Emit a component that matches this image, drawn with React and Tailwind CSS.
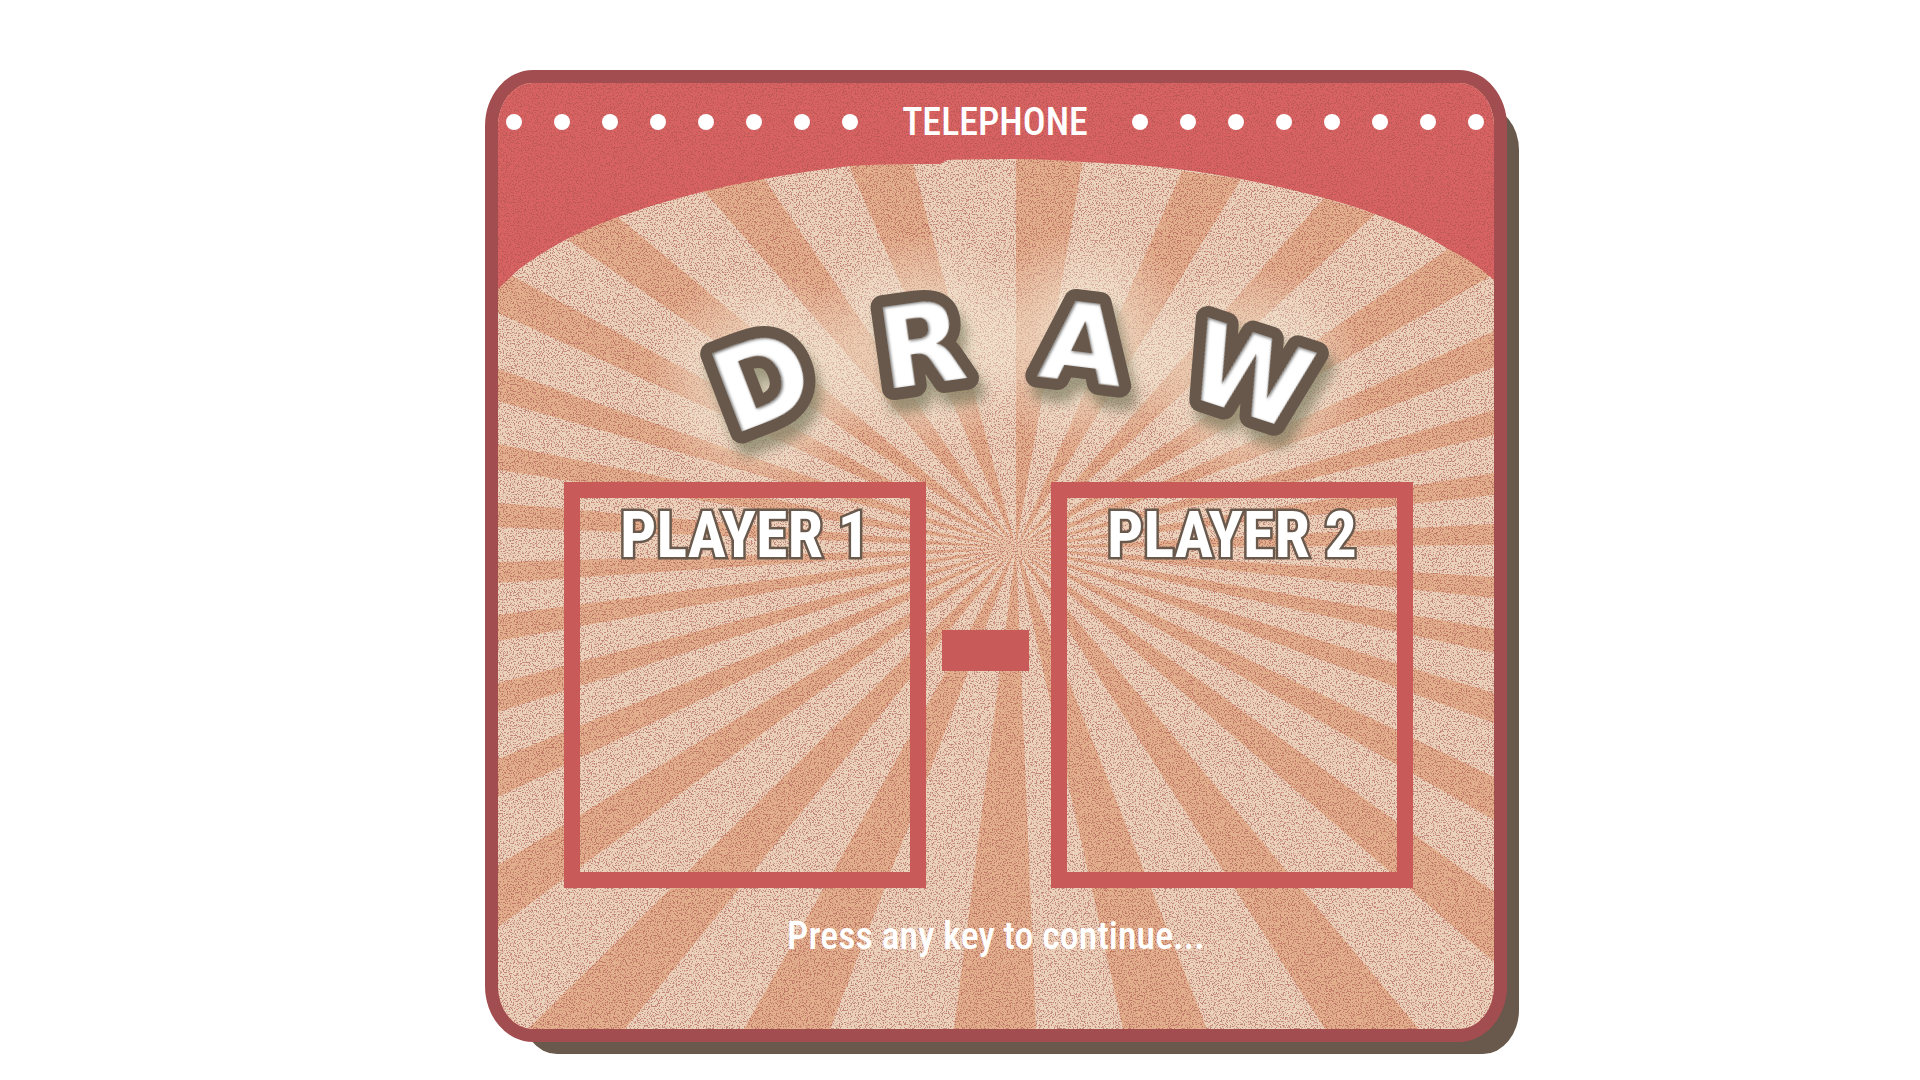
import React from "react";

const CENTER = "518,465";

/* Outer edges of each dark beam, in card coordinates; every beam narrows to CENTER. */
const BEAMS = [
  "0,185 0,230",
  "0,286 0,318",
  "0,361 0,387",
  "0,420 0,444",
  "0,479 0,500",
  "0,532 0,558",
  "0,600 0,629",
  "0,676 0,714",
  "0,782 0,844",
  "30,946 127,946",
  "246,946 332,946",
  "456,946 538,946",
  "625,946 709,946",
  "827,946 921,946",
  "996,809 996,879",
  "996,694 996,737",
  "996,610 996,640",
  "996,546 996,570",
  "996,494 996,515",
  "996,441 996,462",
  "996,390 996,412",
  "996,327 996,352",
  "996,248 996,284",
  "950,166 1000,189",
  "826,115 877,131",
  "684,88 743,96",
  "518,70 586,70",
  "351,83 413,74",
  "206,108 261,88",
  "70,157 108,124",
];

const CANOPY =
  "M0 0H996V197Q975 178 950 166Q920 146 877 131Q830 113 743 96Q690 86 640 82L586 79Q550 76 510 76Q470 76 449 77L442 81H416Q380 81 351 83Q310 88 265 96Q190 109 117 135Q60 156 20 187L0 206Z";

const LETTERS = [
  { char: "D", x: 264, y: 220, turn: -21, size: 114 },
  { char: "R", x: 423, y: 183, turn: -8, size: 112 },
  { char: "A", x: 585, y: 180, turn: 7, size: 108 },
  { char: "W", x: 752, y: 213, turn: 18, size: 110 },
];

function Backdrop() {
  return (
    <svg
      aria-hidden="true"
      className="absolute inset-0 h-full w-full"
      viewBox="0 0 996 946"
      preserveAspectRatio="none"
    >
      <defs>
        <filter id="grain" x="0" y="0" width="100%" height="100%" colorInterpolationFilters="sRGB">
          <feTurbulence type="fractalNoise" baseFrequency="0.73" numOctaves="2" seed="7" />
          <feColorMatrix values="0 0 0 0 0.66  0 0 0 0 0.32  0 0 0 0 0.31  9 0 0 0 -4.7" />
        </filter>
        <radialGradient id="glow">
          <stop offset="0" stopColor="#f6ecd8" stopOpacity="0.9" />
          <stop offset="0.45" stopColor="#f6ecd8" stopOpacity="0.5" />
          <stop offset="1" stopColor="#f6ecd8" stopOpacity="0" />
        </radialGradient>
        <clipPath id="canopy">
          <path d={CANOPY} />
        </clipPath>
      </defs>
      <rect width="996" height="946" fill="#ebd2bb" />
      {BEAMS.map((edge) => (
        <polygon key={edge} points={`${CENTER} ${edge}`} fill="#e3b08e" />
      ))}
      <rect width="996" height="946" filter="url(#grain)" opacity="0.6" />
      {LETTERS.map((l) => (
        <ellipse key={l.char} cx={l.x} cy={l.y + 78} rx="115" ry="110" fill="url(#glow)" />
      ))}
      <path d={CANOPY} fill="#d96363" />
      <g clipPath="url(#canopy)">
        <rect width="996" height="946" filter="url(#grain)" opacity="0.6" />
      </g>
    </svg>
  );
}

function Dots() {
  return (
    <div aria-hidden="true" className="flex gap-8">
      {Array.from({ length: 8 }, (_, i) => (
        <span key={i} className="size-4 rounded-full bg-white" />
      ))}
    </div>
  );
}

function DrawTitle() {
  return (
    <svg role="img" aria-label="Draw" viewBox="0 78 996 321" className="block w-full">
      <defs>
        <filter id="cast" x="-30%" y="-30%" width="170%" height="170%">
          <feDropShadow dx="6" dy="13" stdDeviation="6" floodColor="#6b6c50" floodOpacity="0.6" />
        </filter>
        <filter id="inset" colorInterpolationFilters="sRGB">
          <feGaussianBlur in="SourceAlpha" stdDeviation="1.5" result="soft" />
          <feOffset in="soft" dx="1" dy="1" result="moved" />
          <feComposite in="SourceAlpha" in2="moved" operator="out" result="rim" />
          <feFlood floodColor="#6e6e6e" />
          <feComposite in2="rim" operator="in" result="shade" />
          <feMerge>
            <feMergeNode in="SourceGraphic" />
            <feMergeNode in="shade" />
          </feMerge>
        </filter>
      </defs>
      <g
        fontFamily="'DejaVu Sans', sans-serif"
        fontWeight="700"
        textAnchor="middle"
        strokeLinejoin="round"
      >
        {LETTERS.map((l) => (
          <g key={l.char} fontSize={l.size} transform={`translate(${l.x} ${l.y + 78})`}>
            <g filter="url(#cast)">
              <text transform={`rotate(${l.turn})`} y="40" fill="#68594c" stroke="#68594c" strokeWidth="24">
                {l.char}
              </text>
            </g>
            <text transform={`rotate(${l.turn})`} y="40" fill="#ffffff" filter="url(#inset)" aria-hidden="true">
              {l.char}
            </text>
          </g>
        ))}
      </g>
    </svg>
  );
}

function PlayerBox({ name }) {
  return (
    <section className="h-[406px] border-16 border-[#c85a59] pt-1.5">
      <h2 className="text-center text-[64px] leading-[64px] font-bold whitespace-nowrap text-white [paint-order:stroke_fill] [-webkit-text-stroke:5px_#68594c]">
        {name}
      </h2>
    </section>
  );
}

export default function App() {
  return (
    <main className="grid min-h-screen grid-cols-[485fr_1022fr_413fr] items-start bg-white pt-[70px] pb-9">
      <article className="relative col-start-2 overflow-hidden [border-radius:48px/56px] border-13 border-[#a24d4f] bg-[#d96363] font-['Roboto_Condensed','Liberation_Sans_Narrow','Liberation_Sans',sans-serif] text-white shadow-[24px_24px_0_-12px_#68594c]">
        <Backdrop />
        <div className="relative">
          <header className="flex h-[78px] items-center justify-between pr-2.5 pl-2">
            <Dots />
            <h1 className="text-[38px] leading-[48px] font-medium">TELEPHONE</h1>
            <Dots />
          </header>
          <DrawTitle />
          <div className="grid grid-cols-[66fr_362fr_125fr_362fr_81fr]">
            <div className="col-start-2">
              <PlayerBox name="PLAYER 1" />
            </div>
            <div className="flex items-start pt-[148px] pr-[22px] pl-4">
              <span aria-hidden="true" className="h-[41px] w-full bg-[#c85a59]" />
            </div>
            <PlayerBox name="PLAYER 2" />
          </div>
          <p className="pt-5 pb-[65px] text-center text-[38px] leading-[56px] font-medium">
            Press any key to continue...
          </p>
        </div>
      </article>
    </main>
  );
}
